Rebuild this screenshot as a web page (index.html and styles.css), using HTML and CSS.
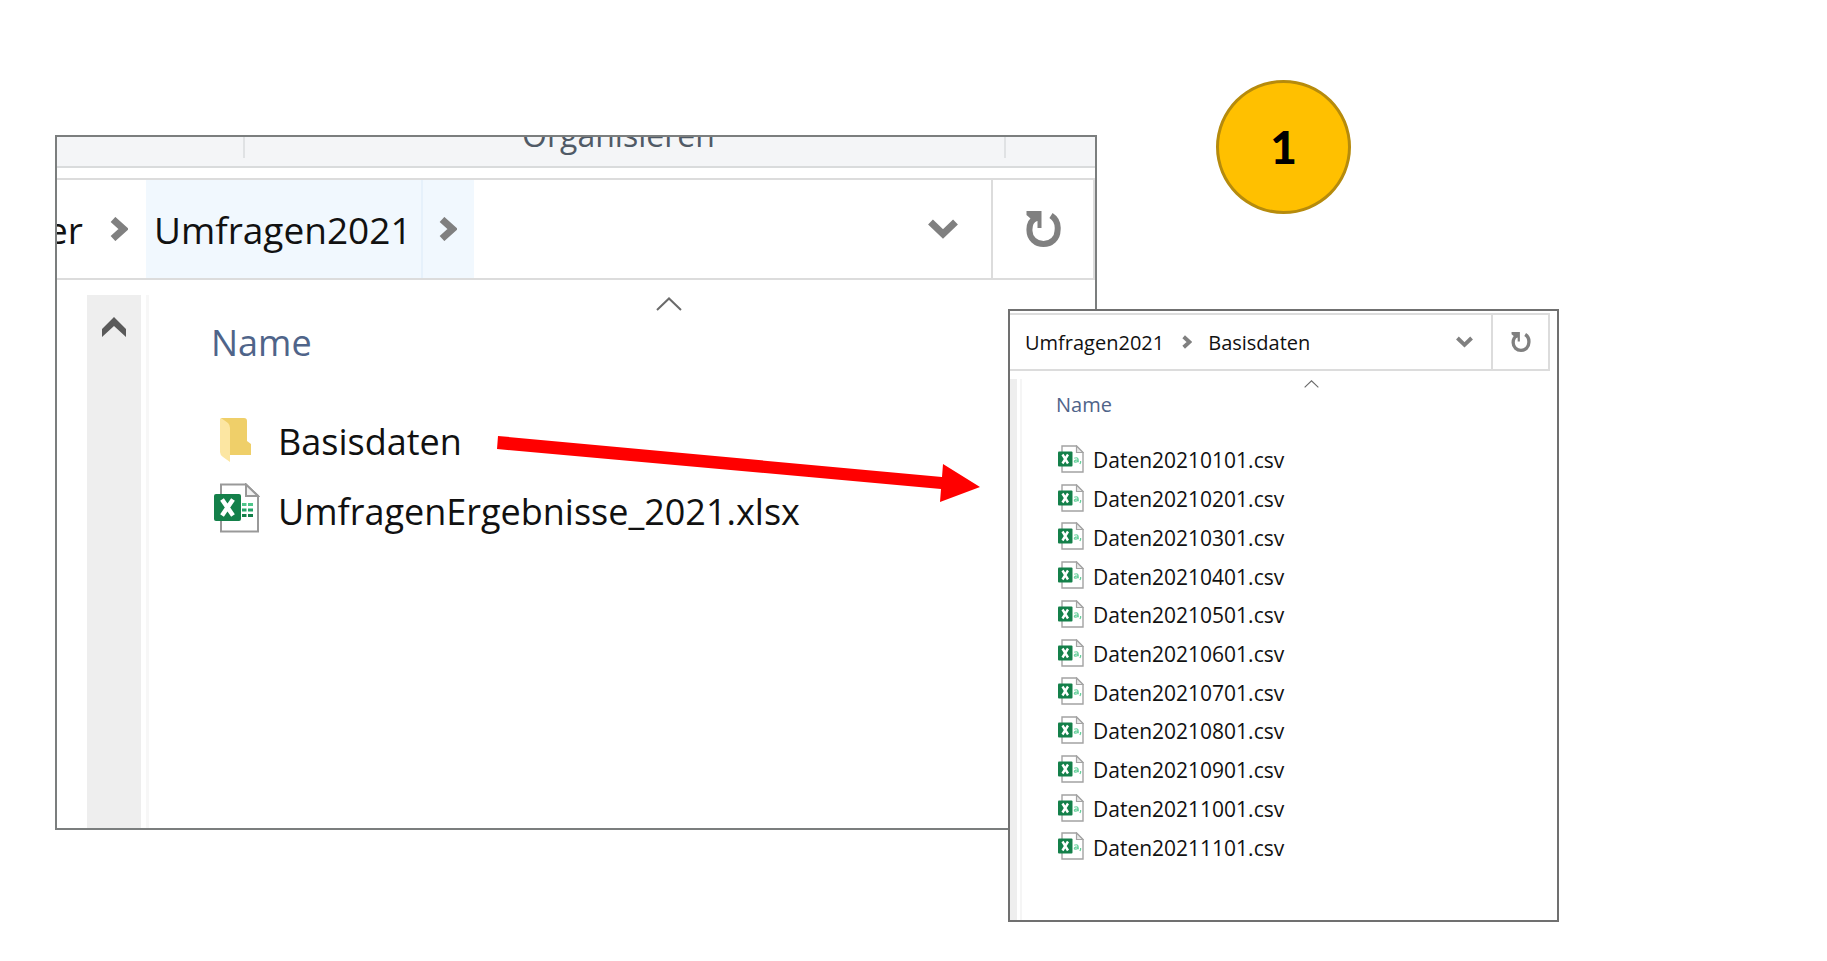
FILE: index.html
```html
<!DOCTYPE html>
<html lang="de">
<head>
<meta charset="utf-8">
<title>Umfragen2021</title>
<link rel="stylesheet" href="styles.css">
</head>
<body>
<svg class="symbols" aria-hidden="true">
  <symbol id="refresh" viewBox="0 0 34 36">
    <path d="M24.500 4.500C30 8 32 13 31 20A14 13 0 0 1 3 20C2.500 14 5 9 10 6" fill="none" stroke="currentColor" stroke-width="6"/>
    <path d="M0 0H15V17H11V10L8 11L0 4Z" fill="currentColor"/>
  </symbol>
  <symbol id="right" viewBox="0 0 18 24"><path d="M3 2.500L13.500 12L3 21.500" fill="none" stroke="currentColor" stroke-width="7"/></symbol>
  <symbol id="down" viewBox="0 0 30 20"><path d="M2.500 3L15 15L27.500 3" fill="none" stroke="currentColor" stroke-width="7"/></symbol>
  <symbol id="sort" viewBox="0 0 26 14"><path d="M1 13L13 1.500L25 13" fill="none" stroke="currentColor" stroke-width="2"/></symbol>
  <symbol id="csv" viewBox="0 0 26 28">
    <path d="M4 1H18.500L25 7.500V27H4Z" fill="#fff" stroke="#a3a3a3" stroke-width="1.400"/>
    <path d="M18.500 1V7.500H25Z" fill="#e8e8e8" stroke="#a3a3a3" stroke-width="1.200"/>
    <rect x="0" y="6.500" width="14.500" height="15" rx="1" fill="#14804a"/>
    <path d="M4.500 9.500L10 18.500M10 9.500L4.500 18.500" stroke="#fff" stroke-width="2.400"/>
    <path d="M16.200 13.200C20 11.800 20.300 13.500 20.300 17.300M20.200 14.800C16 14.600 15.500 17.200 17.500 17.200C19 17.200 20.200 16.200 20.200 15M22.600 16V17.500L21.900 19" fill="none" stroke="#66cf9b" stroke-width="1.200"/>
  </symbol>
</svg>
<main class="stage">
  <section class="window window-large" aria-label="Umfragen2021">
    <div class="ribbon"><span class="ribbon-side"></span><span class="ribbon-label">Organisieren</span><span class="ribbon-end"></span></div>
    <nav class="address">
      <a class="crumb crumb-cut" href="#">er</a>
      <svg class="arrow-right"><use href="#right"/></svg>
      <div class="crumb-active">
        <a class="crumb" href="#">Umfragen2021</a>
        <button class="crumb-more" aria-label="Unterordner"><svg class="arrow-right"><use href="#right"/></svg></button>
      </div>
      <button class="history" aria-label="Verlauf"><svg class="arrow-down"><use href="#down"/></svg></button>
      <button class="refresh" aria-label="Aktualisieren"><svg class="refresh-icon"><use href="#refresh"/></svg></button>
    </nav>
    <div class="body">
      <div class="strip">
        <button class="scroll-up" aria-label="Nach oben"><svg width="26" height="20" viewBox="0 0 26 20"><path d="M13 0L25 12V20L13 9L1 20V12Z" fill="#595959"/></svg></button>
      </div>
      <div class="listing">
        <svg class="sort"><use href="#sort"/></svg>
        <button class="column">Name</button>
        <ul class="files">
          <li><svg class="file-icon" viewBox="0 0 46 50"><path d="M7 5H30Q33 5 33 8V28L37 31V42H12L7 38Z" fill="#efcf69"/><path d="M7 5L14 10Q16 12 16 15V49L9 44Q6 42 6 39V6Z" fill="#fce6a2"/></svg><a href="#">Basisdaten</a></li>
          <li><svg class="file-icon" viewBox="0 0 46 50">
            <path d="M7 1.500H32L44 13V48.500H7Z" fill="#fff" stroke="#999" stroke-width="2"/>
            <path d="M32 1.500V13H44Z" fill="#f2f2f2" stroke="#999" stroke-width="2"/>
            <rect x="0" y="11" width="27" height="27" rx="2" fill="#14804a"/>
            <path d="M8 16.500L19 32.500M19 16.500L8 32.500" stroke="#fff" stroke-width="4.500"/>
            <path d="M28 21.500H32.500M34 21.500H39" stroke="#4fc58a" stroke-width="3"/><path d="M28 27H32.500M34 27H39" stroke="#21a366" stroke-width="3"/><path d="M28 32.500H32.500M34 32.500H39" stroke="#14804a" stroke-width="3"/>
          </svg><a href="#">UmfragenErgebnisse_2021.xlsx</a></li>
        </ul>
      </div>
    </div>
  </section>

  <section class="window window-small" aria-label="Basisdaten">
    <nav class="address">
      <a class="crumb" href="#">Umfragen2021</a>
      <svg class="arrow-right"><use href="#right"/></svg>
      <a class="crumb" href="#">Basisdaten</a>
      <button class="history" aria-label="Verlauf"><svg class="arrow-down"><use href="#down"/></svg></button>
      <button class="refresh" aria-label="Aktualisieren"><svg class="refresh-icon"><use href="#refresh"/></svg></button>
    </nav>
    <div class="body">
      <div class="strip"></div>
      <div class="listing">
        <svg class="sort"><use href="#sort"/></svg>
        <button class="column">Name</button>
        <ul class="files">
          <li><svg class="file-icon"><use href="#csv"/></svg><a href="#">Daten20210101.csv</a></li>
          <li><svg class="file-icon"><use href="#csv"/></svg><a href="#">Daten20210201.csv</a></li>
          <li><svg class="file-icon"><use href="#csv"/></svg><a href="#">Daten20210301.csv</a></li>
          <li><svg class="file-icon"><use href="#csv"/></svg><a href="#">Daten20210401.csv</a></li>
          <li><svg class="file-icon"><use href="#csv"/></svg><a href="#">Daten20210501.csv</a></li>
          <li><svg class="file-icon"><use href="#csv"/></svg><a href="#">Daten20210601.csv</a></li>
          <li><svg class="file-icon"><use href="#csv"/></svg><a href="#">Daten20210701.csv</a></li>
          <li><svg class="file-icon"><use href="#csv"/></svg><a href="#">Daten20210801.csv</a></li>
          <li><svg class="file-icon"><use href="#csv"/></svg><a href="#">Daten20210901.csv</a></li>
          <li><svg class="file-icon"><use href="#csv"/></svg><a href="#">Daten20211001.csv</a></li>
          <li><svg class="file-icon"><use href="#csv"/></svg><a href="#">Daten20211101.csv</a></li>
        </ul>
      </div>
    </div>
  </section>

  <svg class="pointer" viewBox="0 0 484 68" aria-hidden="true"><path d="M1 0L445 41L446 28L483 51L443 66L444 53L0 13Z" fill="#f00"/></svg>
  <div class="badge">1</div>
</main>
</body>
</html>
```
FILE: styles.css
```css
* { box-sizing: border-box; }
body { margin: 0; background: #fff; color: #111; font-family: "Open Sans", "Noto Sans", sans-serif; }
a { color: inherit; text-decoration: none; }
button { margin: 0; padding: 0; border: 0; background: none; color: inherit; font: inherit; }
svg { display: block; flex: none; }
.symbols { position: absolute; width: 0; height: 0; }

.stage { position: relative; min-width: 1500px; min-height: 100vh; }
.window { position: absolute; overflow: hidden; background: #fff; border: 2px solid #7b7e7e; }
.window-large { left: 55px; right: 730px; top: 135px; font-size: 36px; }
.window-small { left: 1008px; right: 268px; top: 309px; border-color: #707070; font-size: 20px; }

.ribbon { display: flex; height: 31px; background: #f4f5f7; border-bottom: 2px solid #d9dbdc; overflow: hidden; }
.ribbon-side { width: 188px; height: 21px; border-right: 2px solid #e0e2e4; }
.ribbon-label { flex: 1; margin-top: -18px; padding-right: 12px; font-size: 32px; line-height: 32px; text-align: center; color: #505a66; }
.ribbon-end { width: 91px; height: 21px; border-left: 2px solid #e0e2e4; }

.address { display: flex; align-items: center; border: 2px solid #dcdcdc; border-left: 0; }
.arrow-right, .arrow-down, .refresh-icon { color: #808080; }
.history { margin-left: auto; }
.refresh { display: flex; align-items: center; justify-content: center; align-self: stretch; border-left: 2px solid #dcdcdc; }

.window-large .address { height: 102px; margin-top: 10px; font-size: 37px; }
.crumb-cut { display: flex; justify-content: flex-end; width: 26px; margin-right: 27px; }
.window-large .arrow-right { width: 18px; height: 24px; }
.crumb-active { display: flex; align-items: center; align-self: stretch; margin-left: 18px; padding-left: 8px; background: #f1f8fe; }
.crumb-active .crumb { width: 267px; }
.crumb-more { display: flex; align-items: center; align-self: stretch; padding: 0 17px 0 16px; border-left: 2px solid #e6f1fb; }
.window-large .arrow-down { width: 30px; height: 20px; margin-right: 33px; }
.window-large .refresh { width: 102px; }
.window-large .refresh-icon { width: 35px; height: 36px; }

.window-small .address { height: 58px; margin: 2px 7px 0 0; padding-left: 15px; }
.window-small .arrow-right { width: 10px; height: 14px; margin: 0 16px 0 18px; }
.window-small .arrow-down { width: 17px; height: 12px; margin-right: 18px; }
.window-small .refresh { width: 57px; }
.window-small .refresh-icon { width: 20px; height: 20px; }

.body { display: flex; }
.strip { background: #eee; }
.listing { flex: 1; }
.sort { color: #6a6a6a; }
.column { display: block; color: #4f6489; }
.files { list-style: none; margin: 0; padding: 0; }
.files li { display: flex; align-items: center; }
.file-icon { align-self: flex-start; }

.window-large .strip { width: 54px; margin: 15px 5px 0 30px; }
.scroll-up { display: block; margin: 22px auto 0 14px; }
.window-large .listing { margin-top: 15px; padding: 2px 0 282px 62px; border-left: 3px solid #f7f7f7; }
.window-large .sort { width: 26px; height: 14px; margin-left: 445px; }
.window-large .column { margin-top: 8px; line-height: 48px; }
.window-large .files { margin-top: 39px; padding-left: 3px; }
.window-large li { height: 70px; gap: 18px; }
.window-large .file-icon { width: 46px; height: 50px; margin-top: 7px; }

.window-small .strip { width: 7px; margin: 8px 3px 0 0; }
.window-small .listing { margin-top: 8px; padding: 1px 0 53px 34px; border-left: 2px solid #f5f5f5; }
.window-small .sort { width: 15px; height: 8px; margin-left: 248px; }
.window-small .column { margin-top: 3px; line-height: 28px; }
.window-small .files { display: grid; grid-template-rows: repeat(11, 1fr); height: 426px; margin-top: 22px; padding-left: 2px; font-size: 21px; }
.window-small li { gap: 9px; }
.window-small .file-icon { width: 26px; height: 28px; margin-top: 4px; }

.pointer { position: absolute; left: 497px; top: 436px; width: 484px; height: 68px; }
.badge { position: absolute; left: 1216px; top: 80px; display: flex; align-items: center; justify-content: center; width: 135px; height: 134px; padding-bottom: 2px; border: 3px solid #b68b0c; border-radius: 50%; background: #ffc000; color: #000; font: 900 46px Lato, sans-serif; }
```
